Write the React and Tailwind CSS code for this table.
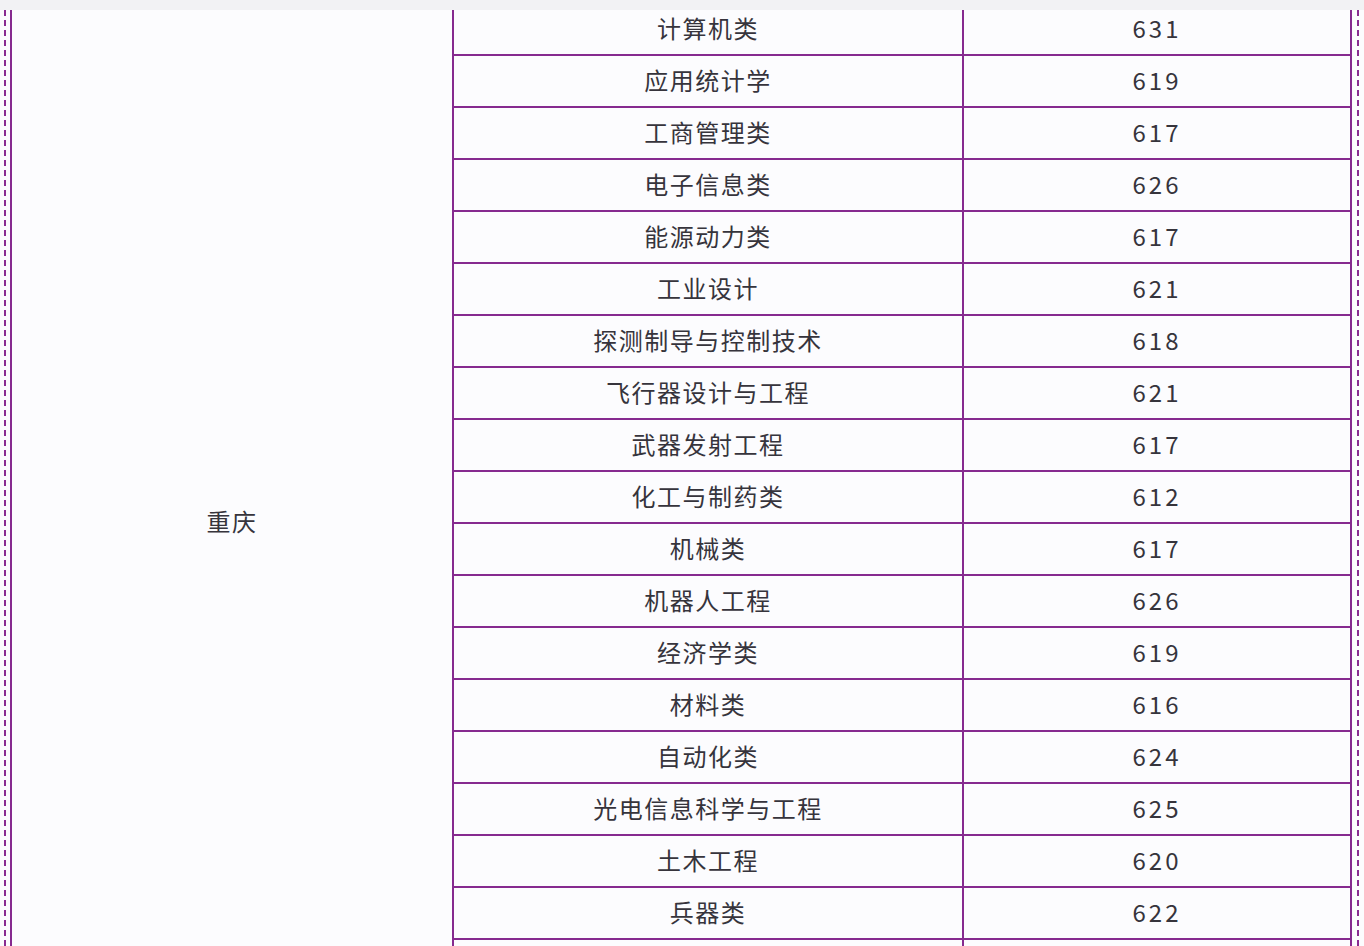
import React from 'react'

const rows = [
  ['计算机类', '631'],
  ['应用统计学', '619'],
  ['工商管理类', '617'],
  ['电子信息类', '626'],
  ['能源动力类', '617'],
  ['工业设计', '621'],
  ['探测制导与控制技术', '618'],
  ['飞行器设计与工程', '621'],
  ['武器发射工程', '617'],
  ['化工与制药类', '612'],
  ['机械类', '617'],
  ['机器人工程', '626'],
  ['经济学类', '619'],
  ['材料类', '616'],
  ['自动化类', '624'],
  ['光电信息科学与工程', '625'],
  ['土木工程', '620'],
  ['兵器类', '622'],
  ['', ''],
]

const App = () => {
  return (
    <div className="w-full h-[946px] overflow-hidden bg-[#fcfcfe] text-[#36343c] font-['Noto_Sans_CJK_SC','Noto_Sans',sans-serif]">
      {/* top strip */}
      <div className="h-[10px] bg-[#f2f2f4]" />

      <div className="flex h-[936px] pl-[4px]">
        <div className="border-l-2 border-dashed border-[#8a2b92] pl-[4px] flex">
          {/* table */}
          <div className="flex border-l-2 border-r-2 border-[#862a8f]">
            {/* merged province cell */}
            <div className="w-[442px] border-r-2 border-[#862a8f] flex justify-center pt-[496px]">
              <p className="text-[24px] leading-[30px] tracking-[1.5px] h-[30px]">重庆</p>
            </div>

            <div className="flex flex-col">
              {rows.map((r, i) => (
                <div
                  key={i}
                  className={`flex border-b-2 border-[#862a8f] shrink-0 ${i === 0 ? 'h-[46px]' : 'h-[52px]'}`}
                >
                  <div className={`w-[510px] border-r-2 border-[#862a8f] flex items-center justify-center text-[24px] tracking-[1.5px] ${i === 0 ? 'pb-[9px]' : 'pb-[3px]'}`}>
                    {r[0]}
                  </div>
                  <div className={`w-[386px] flex items-center justify-center text-[24px] tracking-[3px] ${i === 0 ? 'pb-[9px]' : 'pb-[3px]'}`}>
                    {r[1]}
                  </div>
                </div>
              ))}
            </div>
          </div>

          <div className="w-[5px]" />
          <div className="border-l-2 border-dashed border-[#8a2b92]" />
        </div>
      </div>
    </div>
  )
}

export default App
